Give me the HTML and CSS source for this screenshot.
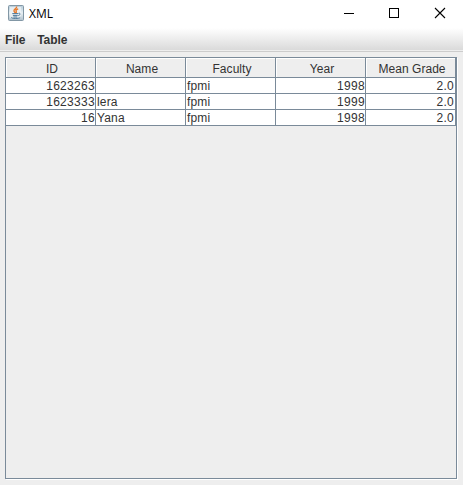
FILE: index.html
```html
<!DOCTYPE html>
<html lang="en">
<head>
<meta charset="utf-8">
<title>XML</title>
<link rel="stylesheet" href="styles.css">
</head>
<body>
<div class="window">
  <header class="titlebar">
    <svg class="app-icon" width="16" height="16" viewBox="0 0 16 16">
      <defs><linearGradient id="tile" x1="0" y1="0" x2="0" y2="1"><stop offset="0" stop-color="#b4cbd9"/><stop offset=".5" stop-color="#e8eff3"/><stop offset="1" stop-color="#aebfca"/></linearGradient></defs>
      <rect x=".5" y=".5" width="15" height="15" rx="1" fill="url(#tile)" stroke="#8297a5"/>
      <rect x="2" y="2" width="11" height="11" fill="#f2f5f7" opacity=".7"/>
      <path d="M8.6 1.5C9.2 3.6 5.4 4.1 6 6.1C6.2 6.8 7 7.3 7.2 8M10.2 3.8C8.4 4.4 7.4 5.4 8.2 6.3C8.7 7 8.4 7.4 7.8 8" fill="none" stroke="#e8792b" stroke-width="1.4"/>
      <path d="M4.3 8.6H10.3M4.9 10.4H9.7M10.6 8.3C12.8 7.8 12.5 10 10.3 10.6M5.4 12H9.2M3.2 12.2C3.2 13.8 11.4 13.8 12.4 12.3" fill="none" stroke="#4b7698" stroke-width="1"/>
    </svg>
    <span class="title">XML</span>
    <div class="controls">
      <svg width="46" height="27" viewBox="0 0 46 27" shape-rendering="crispEdges"><path d="M18 13.5H28" stroke="#000"/></svg>
      <svg width="45" height="27" viewBox="0 0 45 27" shape-rendering="crispEdges"><path d="M17.5 8.5H26.5V17.5H17.5Z" fill="none" stroke="#000"/></svg>
      <svg width="46" height="27" viewBox="0 0 46 27"><path d="M18 8L28 18M28 8L18 18" stroke="#000" stroke-width="1.1"/></svg>
    </div>
  </header>
  <nav class="menubar"><span>File</span><span>Table</span></nav>
  <main class="pane">
    <div class="grid head">
      <div>ID</div><div>Name</div><div>Faculty</div><div>Year</div><div>Mean Grade</div>
    </div>
    <div class="grid row">
      <div class="num">1623263</div><div></div><div>fpmi</div><div class="num">1998</div><div class="num grade">2.0</div>
    </div>
    <div class="grid row">
      <div class="num">1623333</div><div>lera</div><div>fpmi</div><div class="num">1999</div><div class="num grade">2.0</div>
    </div>
    <div class="grid row">
      <div class="num">16</div><div>Yana</div><div>fpmi</div><div class="num">1998</div><div class="num grade">2.0</div>
    </div>
  </main>
</div>
</body>
</html>
```
FILE: styles.css
```css
* { box-sizing: border-box; }
body { margin: 0; background: #eee; color: #333; font: 12px "Liberation Sans", Arial, sans-serif; overflow: hidden; }
.window { width: 463px; height: 485px; display: flex; flex-direction: column; }
.titlebar { height: 28px; flex: none; background: #fff; display: flex; align-items: flex-start; }
.app-icon { margin: 5px 5px 0 8px; }
.title { font: 12px/16px "Open Sans", "Noto Sans", sans-serif; color: #000; padding-top: 6px; }
.controls { display: flex; margin-left: auto; }
.controls svg { display: block; }
.menubar { height: 24px; flex: none; display: flex; gap: 12px; padding-left: 5px; font-weight: bold; line-height: 24px; letter-spacing: -.1px; background: linear-gradient(#fff, #dadada 22px, #eee 22px, #eee 23px, #ccc 23px); }
.pane { flex: 1; margin: 5px 6px 6px 5px; border: 1px solid #7a8a99; box-shadow: 1px 1px 0 #fff; }
.grid { display: grid; grid-template-columns: repeat(5, 90px); }
.grid > div { border-right: 1px solid #7a8a99; border-bottom: 1px solid #7a8a99; white-space: nowrap; }
.head > div { height: 20px; line-height: 22px; text-align: center; box-shadow: inset 1px 1px 0 #fff; letter-spacing: .05px; padding-left: 3px; }
.row > div { height: 16px; line-height: 16px; background: #fff; padding-left: 1px; letter-spacing: .15px; }
.row > .num { text-align: right; padding: 0; letter-spacing: .3px; }
.row > .grade { padding-right: 1px; }
```
